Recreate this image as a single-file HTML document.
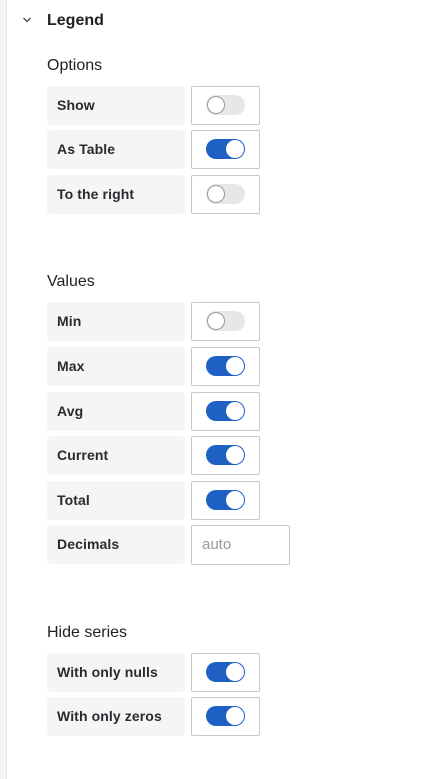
<!DOCTYPE html>
<html><head><style>
body{margin:0;width:441px;height:779px;background:#fff;font-family:"Liberation Sans",Arial,sans-serif;position:relative;overflow:hidden}
.strip{position:absolute;left:0;top:0;width:6px;height:779px;background:#f4f5f5;border-right:1px solid #e3e4e4}
.h{position:absolute;color:#222}
.lbl{position:absolute;left:47px;width:138px;height:39px;background:#f4f5f5;border-radius:3px;font-size:14px;font-weight:bold;color:#2a2a30;line-height:38px;padding-left:10px;box-sizing:border-box;letter-spacing:0.1px}
.sw{position:absolute;left:191px;width:69px;height:39px;border:1px solid #c8c8c8;border-radius:2px;box-sizing:border-box;background:#fff}
.tr{position:absolute;left:14px;top:8px;width:39px;height:20px;border-radius:10px;background:#e7e7e7}
.kn{position:absolute;top:1px;width:16px;height:16px;border-radius:50%;background:#fff;border:1px solid #9a9a9a}
.on .tr{background:#1f60c4}
.on .kn{left:20px;border-color:#fff;width:16px}
.off .kn{left:1px}
.inp{position:absolute;left:191px;top:525px;width:99px;height:40px;border:1px solid #c8c8c8;border-radius:2px;box-sizing:border-box;font-size:15px;color:#9a9a9a;line-height:38px;padding-left:10px}
</style></head><body>
<div class="strip"></div>
<svg style="position:absolute;left:22px;top:16px" width="10" height="8"><path d="M1.5 2 L5 5.5 L8.5 2" stroke="#555" stroke-width="1.5" fill="none"/></svg>
<div class="h" style="left:47px;top:12px;font-size:16px;font-weight:bold;">Legend</div>
<div class="h" style="left:47px;top:57px;font-size:16px;">Options</div>
<div class="lbl" style="top:86px">Show</div><div class="sw off" style="top:86px"><div class="tr"><div class="kn"></div></div></div>
<div class="lbl" style="top:130px">As Table</div><div class="sw on" style="top:130px"><div class="tr"><div class="kn"></div></div></div>
<div class="lbl" style="top:175px">To the right</div><div class="sw off" style="top:175px"><div class="tr"><div class="kn"></div></div></div>
<div class="h" style="left:47px;top:273px;font-size:16px;">Values</div>
<div class="lbl" style="top:302px">Min</div><div class="sw off" style="top:302px"><div class="tr"><div class="kn"></div></div></div>
<div class="lbl" style="top:347px">Max</div><div class="sw on" style="top:347px"><div class="tr"><div class="kn"></div></div></div>
<div class="lbl" style="top:392px">Avg</div><div class="sw on" style="top:392px"><div class="tr"><div class="kn"></div></div></div>
<div class="lbl" style="top:436px">Current</div><div class="sw on" style="top:436px"><div class="tr"><div class="kn"></div></div></div>
<div class="lbl" style="top:481px">Total</div><div class="sw on" style="top:481px"><div class="tr"><div class="kn"></div></div></div>
<div class="lbl" style="top:525px">Decimals</div><div class="inp">auto</div>
<div class="h" style="left:47px;top:624px;font-size:16px;">Hide series</div>
<div class="lbl" style="top:653px">With only nulls</div><div class="sw on" style="top:653px"><div class="tr"><div class="kn"></div></div></div>
<div class="lbl" style="top:697px">With only zeros</div><div class="sw on" style="top:697px"><div class="tr"><div class="kn"></div></div></div>
</body></html>
